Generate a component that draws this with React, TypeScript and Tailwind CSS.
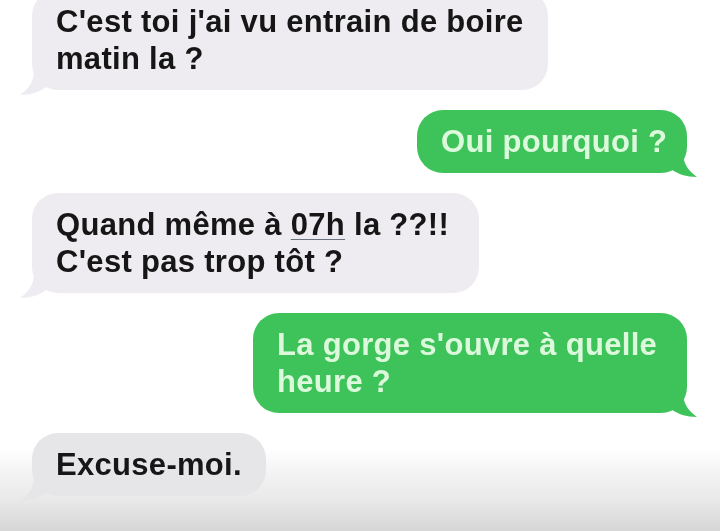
import React from "react";

type Msg = { from: "them" | "me"; lines: React.ReactNode[]; w: string };

const messages: Msg[] = [
  { from: "them", lines: ["C'est toi j'ai vu entrain de boire", "matin la ?"], w: "w-[516px]" },
  { from: "me", lines: ["Oui pourquoi ?"], w: "w-[270px]" },
  {
    from: "them",
    lines: [
      <>
        Quand même à <span className="underline decoration-1 underline-offset-4 decoration-gray-500">07h</span> la ??!!
      </>,
      "C'est pas trop tôt ?",
    ],
    w: "w-[447px]",
  },
  { from: "me", lines: ["La gorge s'ouvre à quelle", "heure ?"], w: "w-[434px]" },
  { from: "them", lines: ["Excuse-moi."], w: "w-[234px]" },
];

function Tail({ side, color }: { side: "left" | "right"; color: string }) {
  if (side === "left") {
    return (
      <svg className="absolute -left-[12px] -bottom-[6px]" width="30" height="26" viewBox="0 0 30 26">
        <path d="M14 0 C14 10 10 18 0 25 C10 25 20 22 26 17 L30 14 L30 0 Z" fill={color} />
      </svg>
    );
  }
  return (
    <svg className="absolute -right-[10px] -bottom-[5px]" width="30" height="26" viewBox="0 0 30 26">
      <path d="M16 0 C16 10 20 18 30 25 C20 25 10 22 4 17 L0 14 L0 0 Z" fill={color} />
    </svg>
  );
}

function Bubble({ msg, last }: { msg: Msg; last?: boolean }) {
  const mine = msg.from === "me";
  const bg = mine ? "#3ec35a" : last ? "#e6e5e8" : "#eeecf0";
  return (
    <div className={`flex ${mine ? "justify-end pr-[33px]" : "justify-start pl-[32px]"}`}>
      <div
        className={`relative ${msg.w} rounded-[26px] pl-[24px] pr-[18px] py-[13px] text-[31px] leading-[37px] font-bold tracking-[0.3px] ${
          mine ? "bg-[#3ec35a] text-[#dcf9dc]" : last ? "bg-[#e6e5e8] text-[#161616]" : "bg-[#eeecf0] text-[#161616]"
        }`}
      >
        {msg.lines.map((l, i) => (
          <div key={i} className="whitespace-nowrap">
            {l}
          </div>
        ))}
        <Tail side={mine ? "right" : "left"} color={bg} />
      </div>
    </div>
  );
}

export default function App() {
  return (
    <div className="w-[720px] h-[531px] overflow-hidden bg-[linear-gradient(to_bottom,#ffffff_0px,#ffffff_448px,#f4f4f4_470px,#e9e9e9_500px,#d6d6d6_531px)] font-['Liberation_Sans',Arial,sans-serif] blur-[0.4px]">
      <div className="flex flex-col gap-[20px] -mt-[10px]">
        {messages.map((m, i) => (
          <Bubble key={i} msg={m} last={i === messages.length - 1} />
        ))}
      </div>
    </div>
  );
}
